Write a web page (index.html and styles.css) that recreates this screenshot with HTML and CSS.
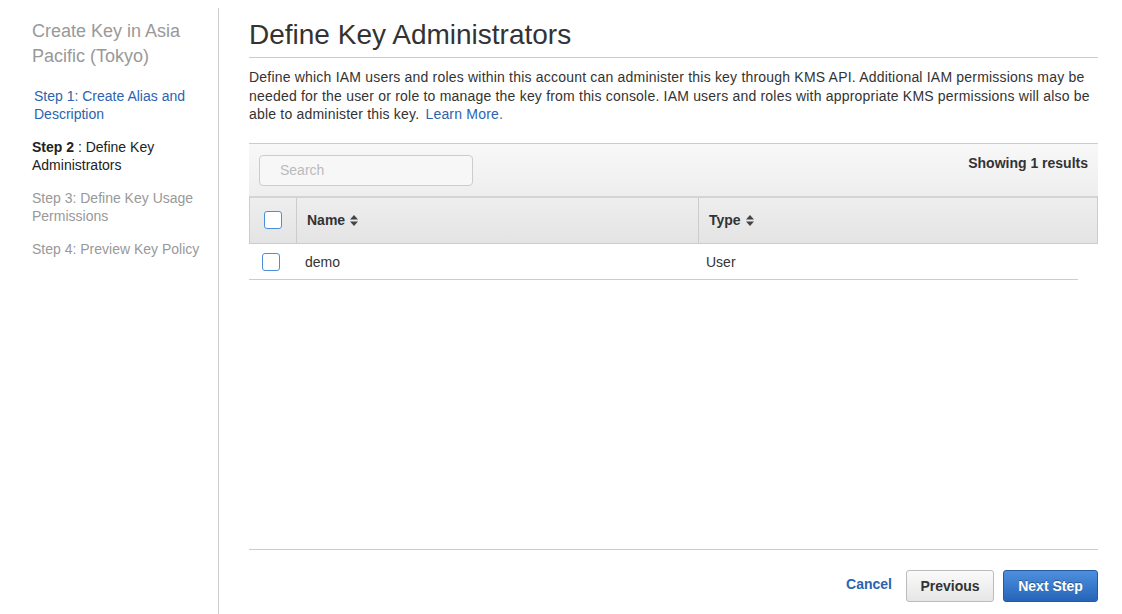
FILE: index.html
```html
<!DOCTYPE html>
<html>
<head>
<meta charset="utf-8">
<link rel="stylesheet" href="styles.css">
</head>
<body>
<div class="page">
  <aside class="sidebar">
    <h2 class="side-title">Create Key in Asia Pacific (Tokyo)</h2>
    <ul class="steps">
      <li class="step step-link"><a href="#">Step 1: Create Alias and Description</a></li>
      <li class="step step-current"><span class="strong">Step 2</span> : Define Key Administrators</li>
      <li class="step step-muted">Step 3: Define Key Usage Permissions</li>
      <li class="step step-muted">Step 4: Preview Key Policy</li>
    </ul>
  </aside>
  <main class="main">
    <h1 class="title">Define Key Administrators</h1>
    <p class="desc">Define which IAM users and roles within this account can administer this key through KMS API. Additional IAM permissions may be needed for the user or role to manage the key from this console. IAM users and roles with appropriate KMS permissions will also be able to administer this key. <a class="learn" href="#">Learn More.</a></p>
    <div class="table-wrap">
      <div class="toolbar">
        <div class="search">Search</div>
        <div class="count">Showing 1 results</div>
      </div>
      <div class="thead">
        <div class="cell cell-check"><span class="cb"></span></div>
        <div class="cell cell-name">Name <svg class="sort" width="8" height="11" viewBox="0 0 8 11"><path d="M4 0 L8 4.5 L0 4.5 Z M0 6.5 L8 6.5 L4 11 Z" fill="#444"/></svg></div>
        <div class="cell cell-type">Type <svg class="sort" width="8" height="11" viewBox="0 0 8 11"><path d="M4 0 L8 4.5 L0 4.5 Z M0 6.5 L8 6.5 L4 11 Z" fill="#444"/></svg></div>
      </div>
      <div class="trow">
        <div class="cell cell-check"><span class="cb"></span></div>
        <div class="cell cell-name">demo</div>
        <div class="cell cell-type">User</div>
      </div>
    </div>
    <div class="spacer"></div>
    <div class="footer">
      <a class="cancel" href="#">Cancel</a>
      <button class="btn btn-prev">Previous</button>
      <button class="btn btn-next">Next Step</button>
    </div>
  </main>
</div>
</body>
</html>
```
FILE: styles.css
```css
* { box-sizing: border-box; }
html, body { margin: 0; padding: 0; background: #fff; }
body {
  font-family: "Liberation Sans", Arial, sans-serif;
  color: #333;
  width: 1122px;
  height: 614px;
  overflow: hidden;
}
a { color: #2a64b0; text-decoration: none; }
.page {
  display: flex;
  height: 614px;
}
.sidebar {
  width: 219px;
  margin-top: 8px;
  border-right: 1px solid #ccc;
  padding: 11px 10px 0 32px;
  flex-shrink: 0;
}
.side-title {
  margin: 0;
  font-size: 18px;
  font-weight: normal;
  line-height: 25px;
  color: #999;
}
.steps {
  list-style: none;
  margin: 18px 0 0;
  padding: 0;
}
.step {
  font-size: 14px;
  line-height: 18px;
  margin-bottom: 15px;
}
.step-link { padding-left: 2px; }
.step-link a { color: #2a64b0; }
.step-current { color: #222; }
.strong { font-weight: bold; }
.step-muted { color: #999; }
.main {
  flex: 1;
  margin-left: 30px;
  margin-right: 24px;
  display: flex;
  flex-direction: column;
}
.title {
  margin: 18px 0 0;
  font-size: 28px;
  font-weight: normal;
  line-height: 34px;
  color: #333;
  padding-bottom: 5px;
  border-bottom: 1px solid #ccc;
}
.desc {
  margin: 10px 0 0;
  font-size: 14px;
  letter-spacing: 0.2px;
  line-height: 18.5px;
  color: #333;
}
.learn { margin-left: 2px; }
.table-wrap { margin-top: 19px; }
.toolbar {
  display: flex;
  justify-content: space-between;
  align-items: flex-start;
  border-top: 1px solid #ccc;
  background: linear-gradient(#f8f8f8, #eeeeee);
  height: 53px;
  padding: 11px 10px 0 10px;
}
.search {
  width: 214px;
  height: 31px;
  border: 1px solid #ccc;
  border-radius: 4px;
  background: #f7f7f7;
  color: #bbb;
  font-size: 14px;
  line-height: 28px;
  padding-left: 20px;
}
.count {
  font-size: 14px;
  font-weight: bold;
  color: #333;
  margin-top: 0;
  line-height: 17px;
}
.thead, .trow {
  display: flex;
  align-items: stretch;
}
.thead {
  height: 48px;
  background: linear-gradient(#eeeeee, #e4e4e4);
  border: 1px solid #ccc;
  border-top: 2px solid #d4d4d4;
  font-weight: bold;
  font-size: 14px;
}
.trow {
  height: 36px;
  font-size: 14px;
  margin-right: 20px;
  border-bottom: 1px solid #ccc;
  padding-top: 1px;
}
.cell {
  display: flex;
  align-items: center;
}
.cell-check {
  width: 47px;
  padding-left: 14px;
}
.thead .cell-check { border-right: 1px solid #ccc; width: 47px; }
.cell-name { width: 402px; padding-left: 10px; }
.thead .cell-name { border-right: 1px solid #ccc; }
.trow .cell-check { padding-left: 13px; }
.trow .cell-name { padding-left: 9px; }
.trow .cell-type { padding-left: 8px; }
.cell-type { flex: 1; padding-left: 10px; }
.cb {
  display: inline-block;
  width: 18px;
  height: 18px;
  border: 1px solid #4a8fd8;
  border-radius: 3px;
  background: #fff;
}
.sort {
  margin-left: 5px;
}
.spacer { flex: 1; }
.footer {
  border-top: 1px solid #ccc;
  height: 65px;
  display: flex;
  align-items: flex-start;
  justify-content: flex-end;
  padding-top: 20px;
  margin-bottom: 0;
}
.cancel {
  font-size: 14px;
  font-weight: bold;
  color: #2a64b0;
  margin-top: 6px;
  margin-right: 14px;
}
.btn {
  font-family: "Liberation Sans", Arial, sans-serif;
  font-size: 14px;
  font-weight: bold;
  height: 32px;
  border-radius: 3px;
  padding: 0 12px;
}
.btn-prev {
  width: 88px;
  background: linear-gradient(#fafafa, #e6e6e6);
  border: 1px solid #bbb;
  color: #333;
  margin-right: 9px;
}
.btn-next {
  width: 95px;
  background: linear-gradient(#4d90de, #2664b8);
  border: 1px solid #2559a0;
  color: #fff;
  text-shadow: 0 -1px 0 rgba(0,0,0,0.35);
}
```
